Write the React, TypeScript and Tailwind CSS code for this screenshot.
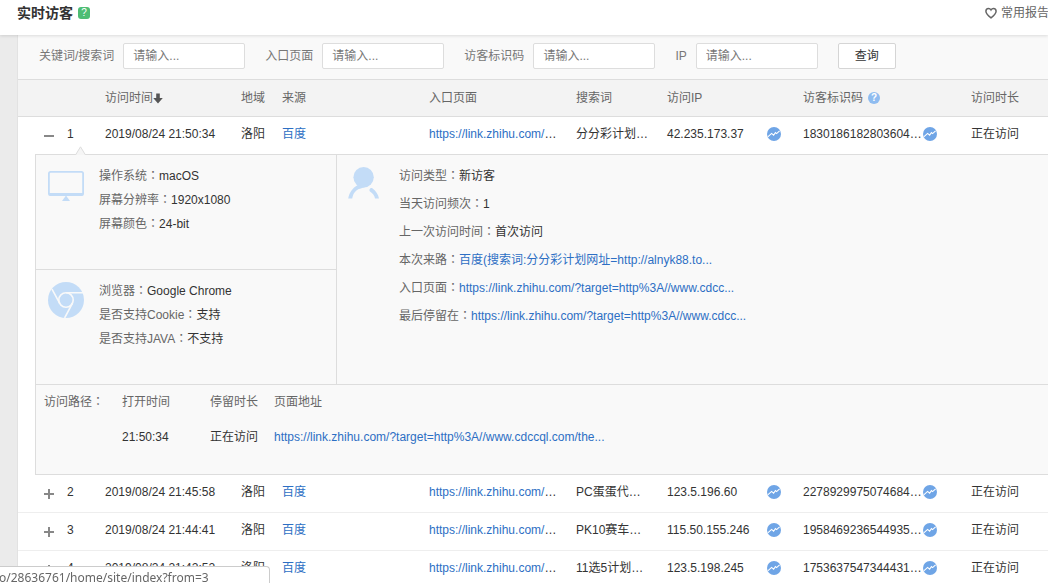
import React, { useState } from 'react';

interface Visit {
  id: number;
  time: string;
  keyword: string;
  ip: string;
  visitorId: string;
}

const visits: Visit[] = [
  { id: 1, time: '2019/08/24 21:50:34', keyword: '分分彩计划…', ip: '42.235.173.37', visitorId: '1830186182803604…' },
  { id: 2, time: '2019/08/24 21:45:58', keyword: 'PC蛋蛋代…', ip: '123.5.196.60', visitorId: '2278929975074684…' },
  { id: 3, time: '2019/08/24 21:44:41', keyword: 'PK10赛车…', ip: '115.50.155.246', visitorId: '1958469236544935…' },
  { id: 4, time: '2019/08/24 21:42:52', keyword: '11选5计划…', ip: '123.5.198.245', visitorId: '1753637547344431…' },
];

const filters = [
  { id: 'keyword', label: '关键词/搜索词' },
  { id: 'entry', label: '入口页面' },
  { id: 'visitor', label: '访客标识码' },
  { id: 'ip', label: 'IP' },
];

const TrendIcon = () => (
  <svg className="h-[14px] w-[14px] shrink-0" viewBox="0 0 14 14" fill="none">
    <circle cx="7" cy="7" r="7" fill="#6fa5e6" />
    <path d="M0.8 9.8L4.6 6.4L6.6 8.2L8.4 5.6L9.6 6.6L12.6 3.8" stroke="#fff" strokeWidth="1.1" />
  </svg>
);

const MonitorIcon = () => (
  <svg className="h-8 w-9" viewBox="0 0 36 32" fill="none">
    <rect x="0.9" y="1.9" width="34.2" height="23.2" rx="1.6" stroke="#c3dcf7" strokeWidth="1.8" />
    <path d="M1 24.2H35" stroke="#c3dcf7" strokeWidth="2.4" />
    <path d="M18 25.5L22 31H14Z" fill="#c3dcf7" />
  </svg>
);

const ChromeIcon = () => (
  <svg className="h-9 w-9" viewBox="0 0 36 36" fill="none">
    <circle cx="18" cy="18" r="18" fill="#c3dcf7" />
    <circle cx="18" cy="18" r="7.2" stroke="#f9f9f9" strokeWidth="1.6" />
    <path d="M18 10.8H35M11.6 21.2L4 7.2M24.4 21.4L16.6 36" stroke="#f9f9f9" strokeWidth="1.6" />
  </svg>
);

const PersonIcon = () => (
  <svg className="h-8 w-8" viewBox="0 0 32 32" fill="none">
    <circle cx="15.6" cy="10.2" r="10.2" fill="#c3dcf7" />
    <path d="M0.2 31.4C1.4 25 5 20.6 9 18.4L12 16L20 19C15 21.4 11.4 21 8.4 23.6C5.8 25.8 4.8 28.4 4.2 31.4Z" fill="#c3dcf7" />
    <path d="M31 31.4C30.2 27.4 28 24 24.6 21.4C22.6 20.2 20.4 22.8 22 24.6C24.8 26.6 26.4 28.6 27 31.4Z" fill="#c3dcf7" />
  </svg>
);

const Colon = () => <span className="font-['Noto_Sans_CJK_TC',sans-serif] leading-none">：</span>;

const Field: React.FC<{ label: string; children: React.ReactNode }> = ({ label, children }) => (
  <li>
    {label}
    <Colon />
    <span className="text-[#333]">{children}</span>
  </li>
);

const Link: React.FC<{ children: React.ReactNode }> = ({ children }) => (
  <a href="#" className="text-[#2d6fc4]">{children}</a>
);

const VisitDetail = () => (
  <div className="relative ml-[17px] border border-r-0 border-[#ddd] bg-[#f9f9f9] text-[#666]">
    <svg className="absolute -top-[9px] left-[39px] h-[9px] w-[11px]" viewBox="0 0 11 9">
      <path d="M0.5 9L5.5 0.8L10.5 9" fill="#f5f5f5" stroke="#ddd" />
    </svg>
    <div className="flex border-b border-[#ddd]">
      <div className="w-[301px] shrink-0 border-r border-[#ddd] leading-6">
        <div className="flex gap-[15px] border-b border-[#ddd] pt-[9px] pb-[33px] pl-3">
          <div className="pt-[6px]"><MonitorIcon /></div>
          <ul>
            <Field label="操作系统">macOS</Field>
            <Field label="屏幕分辨率">1920x1080</Field>
            <Field label="屏幕颜色">24-bit</Field>
          </ul>
        </div>
        <div className="flex gap-[15px] pt-[9px] pb-[33px] pl-3">
          <div className="pt-[3px]"><ChromeIcon /></div>
          <ul>
            <Field label="浏览器">Google Chrome</Field>
            <Field label="是否支持Cookie">支持</Field>
            <Field label="是否支持JAVA">不支持</Field>
          </ul>
        </div>
      </div>
      <div className="flex flex-1 gap-[19px] pt-[7px] pl-[11px]">
        <div className="pt-[5px]"><PersonIcon /></div>
        <ul className="leading-7">
          <Field label="访问类型">新访客</Field>
          <Field label="当天访问频次">1</Field>
          <Field label="上一次访问时间">首次访问</Field>
          <Field label="本次来路"><Link>百度(搜索词:分分彩计划网址=http://alnyk88.to...</Link></Field>
          <Field label="入口页面"><Link>https://link.zhihu.com/?target=http%3A//www.cdcc...</Link></Field>
          <Field label="最后停留在"><Link>https://link.zhihu.com/?target=http%3A//www.cdcc...</Link></Field>
        </ul>
      </div>
    </div>
    <div className="flex pb-[18px] pl-2">
      <div className="w-[78px] leading-[35px]">访问路径<Colon /></div>
      <table className="text-left">
        <thead>
          <tr className="h-[33px]">
            <th className="w-[88px] p-0 font-normal">打开时间</th>
            <th className="w-16 p-0 font-normal">停留时长</th>
            <th className="p-0 font-normal">页面地址</th>
          </tr>
        </thead>
        <tbody>
          <tr className="h-[38px] text-[#333]">
            <td className="p-0">21:50:34</td>
            <td className="p-0">正在访问</td>
            <td className="p-0"><Link>https://link.zhihu.com/?target=http%3A//www.cdccql.com/the...</Link></td>
          </tr>
        </tbody>
      </table>
    </div>
  </div>
);

const App: React.FC = () => {
  const [openId, setOpenId] = useState<number | null>(1);

  return (
    <div className="flex h-screen flex-col overflow-hidden bg-[#ebebeb] font-['Liberation_Sans','Noto_Sans_CJK_SC',sans-serif] text-xs text-[#333]">
      <header className="relative z-10 flex items-center justify-between bg-white pt-[3px] pb-3 pl-[17px] shadow-[0_1px_3px_rgba(0,0,0,0.12)]">
        <div className="flex items-center gap-[5px]">
          <h1 className="text-sm leading-5 font-bold">实时访客</h1>
          <button aria-label="帮助" className="flex h-3 w-3 items-center justify-center rounded-[3px] bg-[#4dbd74] text-[10px] leading-3 text-white">?</button>
        </div>
        <a href="#" className="-mr-px flex items-center gap-1 whitespace-nowrap text-[#666]">
          <svg className="h-3 w-3" viewBox="0 0 12 12" fill="none" stroke="#666" strokeWidth="1.5">
            <path d="M6 10.8C3.6 9 0.9 6.9 0.9 4.3C0.9 2.5 2.1 1.5 3.5 1.5C4.7 1.5 5.5 2.1 6 3C6.5 2.1 7.3 1.5 8.5 1.5C9.9 1.5 11.1 2.5 11.1 4.3C11.1 6.9 8.4 9 6 10.8Z" />
          </svg>
          常用报告
        </a>
      </header>

      <main className="ml-[17px] flex-1 overflow-hidden border-l border-[#e2e2e2] bg-white">
        <form className="flex gap-5 border-b border-[#ddd] bg-[#f9f9f9] pt-2 pb-[10px] pl-[21px]" onSubmit={(e) => e.preventDefault()}>
          {filters.map((f) => (
            <div key={f.id} className="flex items-center gap-[9px]">
              <label htmlFor={f.id} className="whitespace-nowrap text-[#777]">{f.label}</label>
              <input
                id={f.id}
                type="text"
                placeholder="请输入..."
                className="h-[26px] w-[122px] rounded-[2px] border border-[#ddd] bg-white px-[9px] outline-none placeholder:text-[#777]"
              />
            </div>
          ))}
          <button type="submit" className="h-[26px] w-[58px] rounded-[2px] border border-[#d5d5d5] bg-white">查询</button>
        </form>

        <table className="w-full table-fixed border-separate border-spacing-0 text-left">
          <colgroup>
            <col className="w-[49px]" />
            <col className="w-[38px]" />
            <col className="w-[136px]" />
            <col className="w-[41px]" />
            <col className="w-[147px]" />
            <col className="w-[147px]" />
            <col className="w-[91px]" />
            <col className="w-[136px]" />
            <col className="w-[168px]" />
            <col />
          </colgroup>
          <thead>
            <tr className="h-[37px] bg-[#f3f3f3] text-[#666] [&>th]:border-b [&>th]:border-[#ddd] [&>th]:p-0 [&>th]:font-normal">
              <th></th>
              <th></th>
              <th>
                <span className="flex items-center">
                  访问时间
                  <svg className="h-[11px] w-[10px]" viewBox="0 0 10 11" fill="#555">
                    <path d="M3.2 0.5H6.8V5H9.8L5 10.5L0.2 5H3.2Z" />
                  </svg>
                </span>
              </th>
              <th>地域</th>
              <th>来源</th>
              <th>入口页面</th>
              <th>搜索词</th>
              <th>访问IP</th>
              <th>
                <span className="flex items-center gap-[5px]">
                  访客标识码
                  <span className="flex h-3 w-3 items-center justify-center rounded-full bg-[#8fbcf0] text-[10px] leading-3 font-bold text-white">?</span>
                </span>
              </th>
              <th>访问时长</th>
            </tr>
          </thead>
          <tbody>
            {visits.map((v) => {
              const open = openId === v.id;
              return (
                <React.Fragment key={v.id}>
                  <tr className={`[&>td]:p-0 [&>td]:pb-[3px] ${open ? 'h-[37px]' : 'h-[38px] [&>td]:border-b [&>td]:border-[#eee]'}`}>
                    <td>
                      <button
                        aria-label={open ? '收起' : '展开'}
                        onClick={() => setOpenId(open ? null : v.id)}
                        className="ml-[25px] block pt-1"
                      >
                        <svg className="h-3 w-3" viewBox="0 0 12 12" stroke="#888" strokeWidth="2">
                          <path d={open ? 'M1 6H11' : 'M1 6H11M6 1V11'} />
                        </svg>
                      </button>
                    </td>
                    <td>{v.id}</td>
                    <td>{v.time}</td>
                    <td>洛阳</td>
                    <td><Link>百度</Link></td>
                    <td><Link>https://link.zhihu.com/</Link>…</td>
                    <td>{v.keyword}</td>
                    <td>
                      <div className="flex items-center">
                        <span className="w-[100px]">{v.ip}</span>
                        <TrendIcon />
                      </div>
                    </td>
                    <td>
                      <div className="flex items-center gap-px">
                        {v.visitorId}
                        <TrendIcon />
                      </div>
                    </td>
                    <td>正在访问</td>
                  </tr>
                  {open && (
                    <tr>
                      <td colSpan={10} className="p-0"><VisitDetail /></td>
                    </tr>
                  )}
                </React.Fragment>
              );
            })}
          </tbody>
        </table>
      </main>

      <div className="fixed bottom-0 left-0 z-20 flex h-[17px] w-[270px] justify-start overflow-hidden rounded-tr border-t border-r border-[#ccc] bg-white font-['Noto_Sans',sans-serif] leading-[22px] text-[#666]">
        <span className="-ml-px whitespace-nowrap">o/28636761/home/site/index?from=3</span>
      </div>
    </div>
  );
};

export default App;
